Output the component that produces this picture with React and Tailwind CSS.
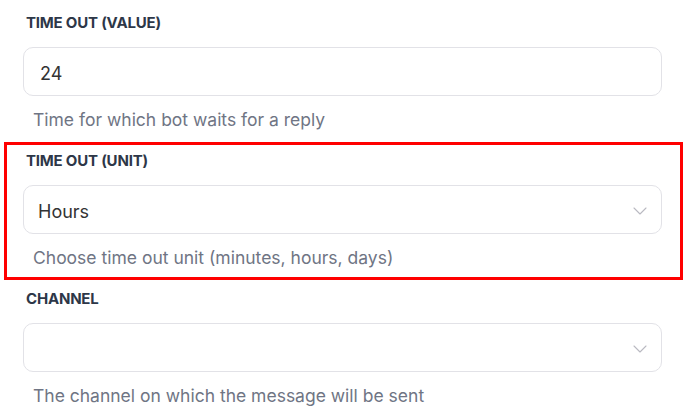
import React from 'react';

const fields = [
  { label: 'TIME OUT (VALUE)', kind: 'input', value: '24', help: 'Time for which bot waits for a reply' },
  { label: 'TIME OUT (UNIT)', kind: 'select', value: 'Hours', help: 'Choose time out unit (minutes, hours, days)', highlight: true },
  { label: 'CHANNEL', kind: 'select', value: '', help: 'The channel on which the message will be sent' },
];

function Chevron() {
  return (
    <svg width="14" height="8" viewBox="0 0 14 8" fill="none" className="shrink-0">
      <polyline points="1,1 7,7 13,1" stroke="#b9b9c1" strokeWidth="1.1" strokeLinecap="round" strokeLinejoin="round" />
    </svg>
  );
}

function Field({ field }) {
  return (
    <div className="relative">
      {field.highlight && (
        <div className="absolute left-[-19px] right-[-21px] top-[-9px] bottom-[-10px] border-[3px] border-[#ff0000] pointer-events-none" />
      )}
      <div className="h-5 pl-[3px] text-[15px] leading-5 font-bold text-[#2d3748] tracking-[-0.2px]">
        {field.label}
      </div>
      <div
        className={
          'mt-[14px] h-[49px] flex items-center pt-[3px] border border-[#e2e2e7] rounded-[10px] bg-white ' +
          (field.kind === 'input' ? 'pl-[16px] pr-[24px]' : 'pl-[14px] pr-[14px]')
        }
      >
        <span className="flex-1 text-[18px] text-[#333333]">{field.value}</span>
        {field.kind === 'select' && <Chevron />}
      </div>
      <div className="mt-[12px] pl-[10px] text-[17.5px] leading-6 text-[#6f7584]">{field.help}</div>
    </div>
  );
}

export default function App() {
  return (
    <div className="w-[688px] h-[418px] overflow-hidden bg-white font-['Inter',sans-serif]">
      <div className="pt-[13px] pl-[23px] w-[662px] flex flex-col gap-[19px]">
        {fields.map((f) => (
          <Field key={f.label} field={f} />
        ))}
      </div>
    </div>
  );
}
